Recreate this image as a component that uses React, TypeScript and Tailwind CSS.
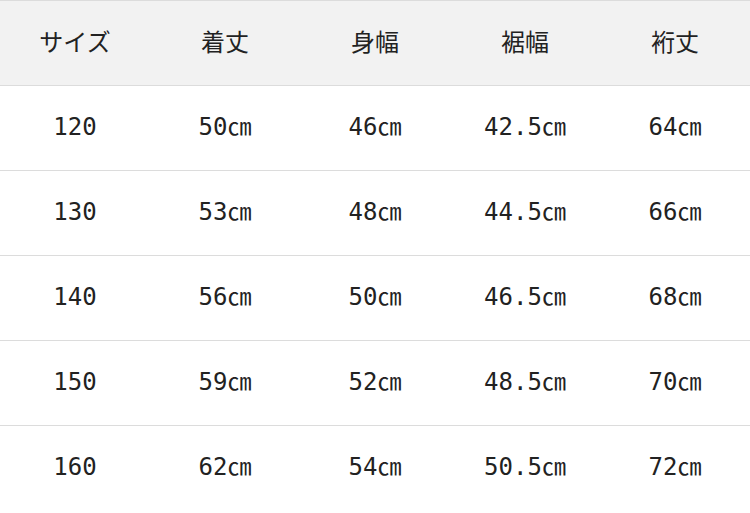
import React from "react";

const headers = ["サイズ", "着丈", "身幅", "裾幅", "裄丈"];

const rows = [
  ["120", "50㎝", "46㎝", "42.5㎝", "64㎝"],
  ["130", "53㎝", "48㎝", "44.5㎝", "66㎝"],
  ["140", "56㎝", "50㎝", "46.5㎝", "68㎝"],
  ["150", "59㎝", "52㎝", "48.5㎝", "70㎝"],
  ["160", "62㎝", "54㎝", "50.5㎝", "72㎝"],
];

const App = () => {
  return (
    <div className="w-[750px] h-[513px] bg-white text-[#222]">
      <div className="grid grid-cols-5 h-[86px] bg-[#f2f2f2] border-t border-b border-[#dcdcdc]">
        {headers.map((h) => (
          <div
            key={h}
            className="flex items-center justify-center pb-[5px] text-[24px] font-['Noto_Sans_CJK_JP',sans-serif]"
          >
            {h}
          </div>
        ))}
      </div>
      {rows.map((row, i) => (
        <div
          key={row[0]}
          className={`grid grid-cols-5 h-[85px] ${
            i < rows.length - 1 ? "border-b border-[#dcdcdc]" : ""
          }`}
        >
          {row.map((cell, j) => (
            <div
              key={j}
              className="flex items-center justify-center pb-[3px] text-[24px] font-['DejaVu_Sans_Mono','Noto_Sans_CJK_JP',monospace]"
            >
              {cell}
            </div>
          ))}
        </div>
      ))}
    </div>
  );
};

export default App;
